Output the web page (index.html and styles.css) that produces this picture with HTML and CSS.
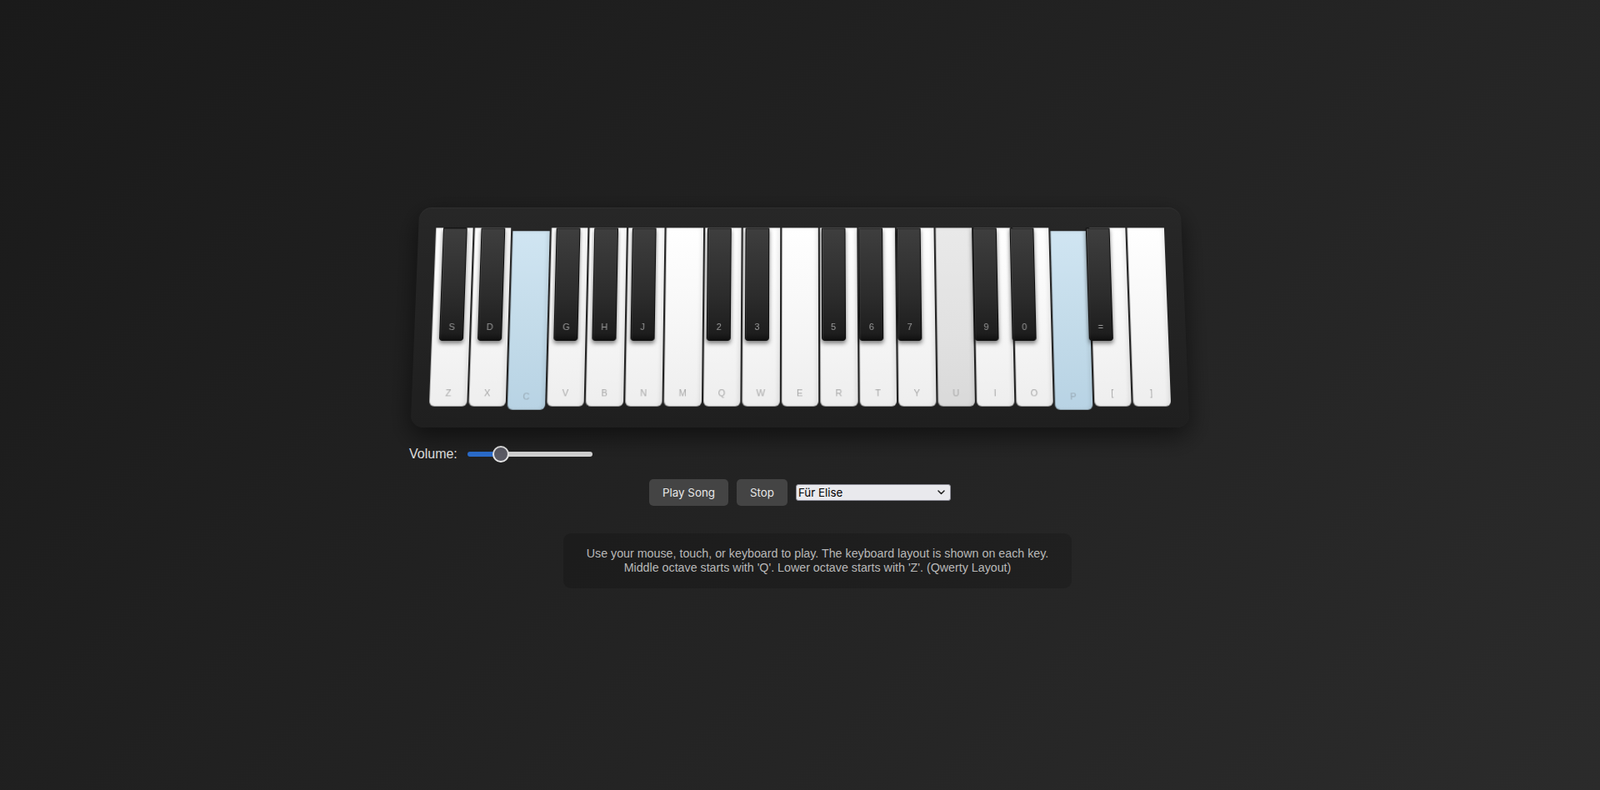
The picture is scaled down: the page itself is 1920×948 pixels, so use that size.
FILE: index.html
```html
<!DOCTYPE html>
<html lang="en">
<head>
<meta charset="utf-8">
<title>Piano</title>
<link rel="stylesheet" href="styles.css">
</head>
<body>
<main class="app">
  <div class="piano">
    <div class="keys">
      <div class="white-key"><span class="label">Z</span></div>
      <div class="white-key"><span class="label">X</span></div>
      <div class="white-key active"><span class="label">C</span></div>
      <div class="white-key"><span class="label">V</span></div>
      <div class="white-key"><span class="label">B</span></div>
      <div class="white-key"><span class="label">N</span></div>
      <div class="white-key"><span class="label">M</span></div>
      <div class="white-key"><span class="label">Q</span></div>
      <div class="white-key"><span class="label">W</span></div>
      <div class="white-key"><span class="label">E</span></div>
      <div class="white-key"><span class="label">R</span></div>
      <div class="white-key"><span class="label">T</span></div>
      <div class="white-key"><span class="label">Y</span></div>
      <div class="white-key hover"><span class="label">U</span></div>
      <div class="white-key"><span class="label">I</span></div>
      <div class="white-key"><span class="label">O</span></div>
      <div class="white-key active"><span class="label">P</span></div>
      <div class="white-key"><span class="label">[</span></div>
      <div class="white-key"><span class="label">]</span></div>

      <div class="black-key" style="--k:1"><span class="label">S</span></div>
      <div class="black-key" style="--k:2"><span class="label">D</span></div>
      <div class="black-key" style="--k:4"><span class="label">G</span></div>
      <div class="black-key" style="--k:5"><span class="label">H</span></div>
      <div class="black-key" style="--k:6"><span class="label">J</span></div>
      <div class="black-key" style="--k:8"><span class="label">2</span></div>
      <div class="black-key" style="--k:9"><span class="label">3</span></div>
      <div class="black-key" style="--k:11"><span class="label">5</span></div>
      <div class="black-key" style="--k:12"><span class="label">6</span></div>
      <div class="black-key" style="--k:13"><span class="label">7</span></div>
      <div class="black-key" style="--k:15"><span class="label">9</span></div>
      <div class="black-key" style="--k:16"><span class="label">0</span></div>
      <div class="black-key" style="--k:18"><span class="label">=</span></div>
    </div>
  </div>

  <div class="volume-row">
    <label class="volume-label" for="volume">Volume:</label>
    <input id="volume" class="volume" type="range" min="0" max="100" value="23">
  </div>

  <div class="controls">
    <button class="btn">Play Song</button>
    <button class="btn">Stop</button>
    <div class="select-wrap">
      <select class="song-select">
        <option>Für Elise</option>
        <option>Ode to Joy</option>
        <option>Twinkle Twinkle Little Star</option>
      </select>
      <svg class="chevron" width="9" height="6" viewBox="0 0 9 6" aria-hidden="true">
        <path d="M1 1 L4.5 4.5 L8 1" fill="none" stroke="#202020" stroke-width="1.5" stroke-linecap="round" stroke-linejoin="round"/>
      </svg>
    </div>
  </div>

  <div class="info">
    Use your mouse, touch, or keyboard to play. The keyboard layout is shown on each key.<br>
    Middle octave starts with 'Q'. Lower octave starts with 'Z'. (Qwerty Layout)
  </div>
</main>
</body>
</html>
```

FILE: styles.css
```css
html, body {
  margin: 0;
  padding: 0;
}

body {
  min-height: 100vh;
  background: linear-gradient(135deg, #1a1a1a 0%, #2b2b2b 100%);
  font-family: "Liberation Sans", Arial, sans-serif;
  color: #e0e0e0;
}

.app {
  min-height: 100vh;
  box-sizing: border-box;
  padding-top: 5px;
  display: flex;
  flex-direction: column;
  align-items: center;
  justify-content: center;
}

.piano {
  box-sizing: border-box;
  width: 924px;
  padding: 25px 20px;
  background: linear-gradient(to bottom, #272727 0%, #1f1f1f 100%);
  border-radius: 15px;
  box-shadow: 0 10px 30px rgba(0, 0, 0, 0.55), inset 0 1px 0 rgba(255, 255, 255, 0.04);
  transform: perspective(1000px) rotateX(5deg);
}

.keys {
  position: relative;
  display: flex;
  height: 215px;
}

.white-key {
  box-sizing: border-box;
  width: 44.5px;
  height: 215px;
  margin: 0 1px;
  flex: none;
  display: flex;
  align-items: flex-end;
  justify-content: center;
  padding-bottom: 10px;
  background: linear-gradient(to bottom, #ffffff 0%, #f7f7f7 50%, #eeeeee 100%);
  border-radius: 0 0 6px 6px;
  box-shadow: inset -3px 0 4px rgba(0, 0, 0, 0.07), inset 1px 0 0 rgba(0, 0, 0, 0.25);
}

.white-key .label {
  font-size: 11px;
  color: #a9a9a9;
}

.white-key.active {
  transform: translateY(4px);
  background: linear-gradient(to bottom, #d0e5f2 0%, #c4dcea 50%, #b8d3e4 100%);
}

.white-key.active .label {
  color: #98a9b5;
}

.white-key.hover {
  background: linear-gradient(to bottom, #e9e9e9 0%, #e1e1e1 60%, #d9d9d9 100%);
}

.black-key {
  position: absolute;
  top: 0;
  left: calc(var(--k) * 45.76px - 35.7px);
  box-sizing: border-box;
  width: 29px;
  height: 137px;
  display: flex;
  align-items: flex-end;
  justify-content: center;
  padding-bottom: 10px;
  background: linear-gradient(to bottom, #3e3e3e 0%, #2c2c2c 60%, #1e1e1e 94%, #111 100%);
  border: 1px solid #0b0b0b;
  border-radius: 0 0 3px 3px;
  box-shadow: 0 3px 5px rgba(0, 0, 0, 0.5), inset 1px 0 0 rgba(255, 255, 255, 0.06);
  z-index: 2;
}

.black-key .label {
  font-size: 11px;
  color: #9a9a9a;
}

.volume-row {
  width: 938px;
  height: 26px;
  margin-top: 20px;
  display: flex;
  align-items: center;
}

.volume-label {
  font-size: 16px;
  color: #e0e0e0;
  margin-right: 12px;
}

.volume {
  -webkit-appearance: none;
  appearance: none;
  width: 150px;
  height: 6px;
  margin: 0;
  border-radius: 3px;
  background: linear-gradient(to right, #2b6ed0 0%, #2b6ed0 23%, #d6d6d6 23%, #d6d6d6 100%);
  outline: none;
}

.volume::-webkit-slider-thumb {
  -webkit-appearance: none;
  appearance: none;
  width: 20px;
  height: 20px;
  border-radius: 50%;
  background: #5c5c66;
  border: 2px solid #e8e8e8;
  box-sizing: border-box;
}

.controls {
  margin-top: 17px;
  display: flex;
  align-items: center;
  gap: 10px;
}

.btn {
  height: 32px;
  padding: 0 16px;
  border: none;
  border-radius: 5px;
  background: #444444;
  color: #e8e8e8;
  font-family: Inter, "Noto Sans", sans-serif;
  font-size: 13.33px;
}

.select-wrap {
  position: relative;
  display: flex;
}

.song-select {
  -webkit-appearance: none;
  appearance: none;
  box-sizing: border-box;
  width: 186px;
  height: 20px;
  margin: 0;
  padding: 0 20px 0 2px;
  border: 1px solid #8a8a94;
  border-radius: 3px;
  background: #e9e9ed;
  color: #000;
  font-family: Inter, "Noto Sans", sans-serif;
  font-size: 13.33px;
  outline: none;
}

.chevron {
  position: absolute;
  right: 7px;
  top: 7px;
  pointer-events: none;
}

.info {
  margin-top: 33px;
  margin-left: 42px;
  width: 610px;
  box-sizing: border-box;
  padding: 16px 20px;
  background: rgba(0, 0, 0, 0.15);
  border-radius: 9px;
  text-align: center;
  font-size: 14.25px;
  line-height: 16.8px;
  color: #b8b8b8;
}
```
